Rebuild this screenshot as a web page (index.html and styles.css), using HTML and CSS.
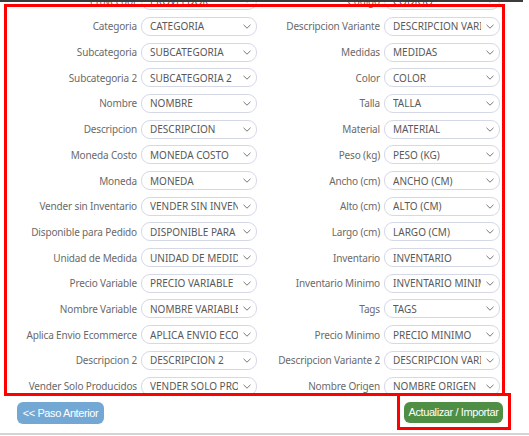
FILE: index.html
```html
<!DOCTYPE html>
<html lang="es">
<head>
  <meta charset="UTF-8">
  <meta name="viewport" content="width=device-width, initial-scale=1.0">
  <title>Importar Productos</title>
  <link rel="stylesheet" href="styles.css">
</head>
<body>
  <div class="topbar"></div>

  <form class="mapping">
    <div class="field"><label>Proveedor</label><select><option>PROVEEDOR</option></select></div>
    <div class="field"><label>Codigo</label><select><option>CODIGO</option></select></div>

    <div class="field"><label>Categoria</label><select><option>CATEGORIA</option></select></div>
    <div class="field"><label>Descripcion Variante</label><select><option>DESCRIPCION VARIANTE</option></select></div>

    <div class="field"><label>Subcategoria</label><select><option>SUBCATEGORIA</option></select></div>
    <div class="field"><label>Medidas</label><select><option>MEDIDAS</option></select></div>

    <div class="field"><label>Subcategoria 2</label><select><option>SUBCATEGORIA 2</option></select></div>
    <div class="field"><label>Color</label><select><option>COLOR</option></select></div>

    <div class="field"><label>Nombre</label><select><option>NOMBRE</option></select></div>
    <div class="field"><label>Talla</label><select><option>TALLA</option></select></div>

    <div class="field"><label>Descripcion</label><select><option>DESCRIPCION</option></select></div>
    <div class="field"><label>Material</label><select><option>MATERIAL</option></select></div>

    <div class="field"><label>Moneda Costo</label><select><option>MONEDA COSTO</option></select></div>
    <div class="field"><label>Peso (kg)</label><select><option>PESO (KG)</option></select></div>

    <div class="field"><label>Moneda</label><select><option>MONEDA</option></select></div>
    <div class="field"><label>Ancho (cm)</label><select><option>ANCHO (CM)</option></select></div>

    <div class="field"><label>Vender sin Inventario</label><select><option>VENDER SIN INVENTARIO</option></select></div>
    <div class="field"><label>Alto (cm)</label><select><option>ALTO (CM)</option></select></div>

    <div class="field"><label>Disponible para Pedido</label><select><option>DISPONIBLE PARA PEDIDO</option></select></div>
    <div class="field"><label>Largo (cm)</label><select><option>LARGO (CM)</option></select></div>

    <div class="field"><label>Unidad de Medida</label><select><option>UNIDAD DE MEDIDA</option></select></div>
    <div class="field"><label>Inventario</label><select><option>INVENTARIO</option></select></div>

    <div class="field"><label>Precio Variable</label><select><option>PRECIO VARIABLE</option></select></div>
    <div class="field"><label>Inventario Minimo</label><select><option>INVENTARIO MINIMO</option></select></div>

    <div class="field"><label>Nombre Variable</label><select><option>NOMBRE VARIABLE</option></select></div>
    <div class="field"><label>Tags</label><select><option>TAGS</option></select></div>

    <div class="field"><label>Aplica Envio Ecommerce</label><select><option>APLICA ENVIO ECOMMERCE</option></select></div>
    <div class="field"><label>Precio Minimo</label><select><option>PRECIO MINIMO</option></select></div>

    <div class="field"><label>Descripcion 2</label><select><option>DESCRIPCION 2</option></select></div>
    <div class="field"><label>Descripcion Variante 2</label><select><option>DESCRIPCION VARIANTE 2</option></select></div>

    <div class="field"><label>Vender Solo Producidos</label><select><option>VENDER SOLO PRODUCIDOS</option></select></div>
    <div class="field"><label>Nombre Origen</label><select><option>NOMBRE ORIGEN</option></select></div>
  </form>

  <div class="actions">
    <button type="button" class="btn btn-back">&lt;&lt; Paso Anterior</button>
    <button type="button" class="btn btn-import">Actualizar / Importar</button>
  </div>
  <div class="footer-line"></div>

  <!-- marcas rojas de revision -->
  <div class="mark mark-form"></div>
  <div class="mark mark-button"></div>
</body>
</html>
```

FILE: styles.css
```css
body { margin:0; background:#fff; font-family:"Noto Sans",sans-serif; position:relative; height:436px; overflow:hidden; }

.topbar { position:absolute; top:0; left:0; right:6px; height:2px; background:#3c3c3c; z-index:2; }

.mapping { display:grid; grid-template-columns:243px 243px; grid-auto-rows:19px; row-gap:6.7px; margin:-8.8px 0 0 14px; }
.field { display:flex; align-items:center; justify-content:flex-end; gap:4px; min-width:0; }
.field label { color:#6a6a6a; font-size:10px; letter-spacing:-0.15px; white-space:nowrap; }
.field select {
  -webkit-appearance:none; appearance:none;
  width:116px; height:19px; flex:none; box-sizing:border-box;
  padding:0 18px 0 8px; margin:0;
  border:1px solid #d5d9e6; border-radius:9px; background:#fff;
  color:#595959; font-family:"Noto Sans",sans-serif; font-size:10px;
  background-image:url("data:image/svg+xml,%3Csvg xmlns='http://www.w3.org/2000/svg' width='8' height='5' viewBox='0 0 8 5'%3E%3Cpath d='M.5.8 4 4.2 7.5.8' fill='none' stroke='%23777' stroke-width='1'/%3E%3C/svg%3E");
  background-repeat:no-repeat; background-position:right 5px center;
}

.actions { display:flex; justify-content:space-between; align-items:flex-start; margin:6.3px 26px 0 17px; height:22px; }
.btn { border:none; color:#fff; font-family:"Liberation Sans",Arial,sans-serif; font-size:11px; letter-spacing:-0.4px; white-space:nowrap; height:22px; padding:0; border-radius:6px; cursor:pointer; }
.btn-back { background:#74a8d4; width:87px; }
.btn-import { background:#4e8e45; width:99px; height:21px; }

.footer-line { margin-top:9px; height:2px; background:#d4d4d4; }

.mark { position:absolute; border:3px solid #f00; box-sizing:border-box; z-index:3; }
.mark-form { left:4px; top:4px; width:501px; height:392px; }
.mark-button { left:397px; top:393px; width:114px; height:37px; }
```
